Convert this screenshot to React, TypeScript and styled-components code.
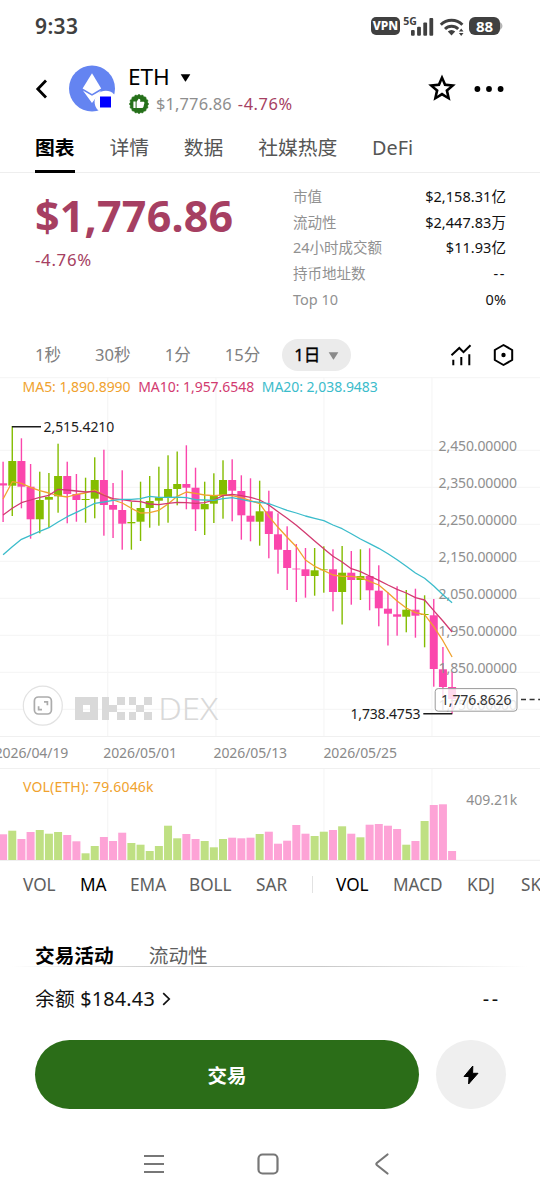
import React from "react";
import styled, { createGlobalStyle } from "styled-components";

const GlobalStyle = createGlobalStyle`
  *, *::before, *::after { box-sizing: border-box; }
  body {
    margin: 0;
    background: #fff;
    font-family: "Noto Sans", "Noto Sans CJK SC", sans-serif;
    color: #111;
    overflow: hidden;
  }
  svg { display: block; flex: none; }
  svg text { white-space: pre; }
`;

const ROSE = "#a63f62";
const UP = "#84bd00";
const DOWN = "#fb46ac";
const ORANGE = "#f0a22e";
const CRIMSON = "#d23a70";
const CYAN = "#3bbccb";
const GRID = "#f6f6f6";

const Screen = styled.main`
  width: 540px;
  height: 1200px;
  display: flex;
  flex-direction: column;
  background: #fff;
  overflow: hidden;
`;

/* ---------- status bar ---------- */

const StatusBar = styled.div`
  height: 52px;
  flex: none;
  display: flex;
  align-items: center;
  justify-content: space-between;
  padding: 0 37px 0 35px;
  color: #404040;
`;

const Clock = styled.span`
  font-size: 21px;
  font-weight: 600;
  line-height: 26px;
  letter-spacing: 0.4px;
`;

const StatusIcons = styled.div`
  display: flex;
  align-items: center;
`;

const VpnBadge = styled.span`
  width: 29px;
  height: 18px;
  border-radius: 5px;
  background: #404040;
  color: #fff;
  font-size: 12px;
  font-weight: 800;
  line-height: 18.5px;
  text-align: center;
  margin-right: 2px;
`;

const Battery = styled.span`
  width: 31px;
  height: 18px;
  border-radius: 6px;
  background: #404040;
  color: #fff;
  font-size: 15px;
  font-weight: 700;
  line-height: 18.6px;
  text-align: center;
`;

/* ---------- token header ---------- */

const Header = styled.header`
  height: 73px;
  flex: none;
  display: flex;
  align-items: center;
  padding: 0 36.5px 0 35px;
`;

const TokenInfo = styled.div`
  flex: 1;
  display: flex;
  flex-direction: column;
  padding: 3px 0 0 13px;
`;

const TokenName = styled.div`
  display: flex;
  align-items: center;
  gap: 10px;
  height: 28px;
  font-size: 22.6px;
  line-height: 28px;
  color: #000;

  svg { margin-top: 2px; }
`;

const TokenQuote = styled.div`
  display: flex;
  align-items: center;
  height: 26px;
  padding-left: 1px;
  font-size: 16.4px;
  line-height: 26px;
  color: #8e8e8e;
`;

const QuoteValue = styled.span`
  margin: 0 6px 0 7px;
  letter-spacing: 0.15px;
`;

const QuoteChange = styled.span`
  color: ${ROSE};
  letter-spacing: 0.6px;
`;

const HeaderActions = styled.div`
  display: flex;
  align-items: center;
  gap: 17px;
`;

/* ---------- tabs ---------- */

const Tabs = styled.nav`
  height: 48px;
  flex: none;
  display: flex;
  gap: 34.8px;
  padding: 0 35px;
  border-bottom: 1px solid #eee;
`;

const Tab = styled.span<{ $active?: boolean }>`
  height: 48px;
  font-size: 19.8px;
  line-height: 45.6px;
  font-weight: ${(p) => (p.$active ? 700 : 400)};
  color: ${(p) => (p.$active ? "#000" : "#555")};
  border-bottom: 3px solid ${(p) => (p.$active ? "#000" : "transparent")};
`;

/* ---------- price summary ---------- */

const Summary = styled.section`
  height: 158px;
  flex: none;
  display: flex;
  justify-content: space-between;
  padding: 0 34px 0 35px;
`;

const PriceColumn = styled.div`
  display: flex;
  flex-direction: column;
  padding-top: 16px;
  color: ${ROSE};
`;

const Price = styled.div`
  font-size: 43px;
  font-weight: 700;
  line-height: 54px;
  letter-spacing: 0.2px;
`;

const PriceChange = styled.div`
  font-size: 16.8px;
  line-height: 24px;
  margin-top: 5px;
  letter-spacing: 0.7px;
`;

const Stats = styled.dl`
  width: 213px;
  margin: 0;
  padding-top: 11px;
`;

const Stat = styled.div`
  display: flex;
  justify-content: space-between;
  font-size: 14.5px;
  line-height: 25.7px;
`;

const StatName = styled.dt`
  color: #919191;
`;

const StatValue = styled.dd<{ $blank: boolean }>`
  margin: 0;
  color: #111;
  letter-spacing: ${(p) => (p.$blank ? "1.6px" : "0.05px")};
`;

/* ---------- interval picker ---------- */

const Intervals = styled.div`
  height: 46px;
  flex: none;
  display: flex;
  align-items: center;
  padding: 1px 26px 0 35px;
  font-size: 16.6px;
  line-height: 24px;
  color: #808080;
`;

const Interval = styled.span`
  margin-right: 34px;
`;

const IntervalPill = styled.span`
  width: 69px;
  height: 32px;
  border-radius: 16px;
  margin-left: -12px;
  padding: 0 12px;
  display: flex;
  align-items: center;
  justify-content: space-between;
  background: #ebebeb;
  color: #000;
  -webkit-text-stroke: 0.35px #000;

  svg { margin-top: 3px; }
`;

const ChartTools = styled.div`
  margin-left: auto;
  display: flex;
  gap: 21.5px;
`;

/* ---------- indicators ---------- */

const Indicators = styled.div`
  height: 46px;
  flex: none;
  display: flex;
  align-items: center;
  gap: 23px;
  padding-left: 23px;
  font-size: 17.2px;
  white-space: nowrap;
  overflow: hidden;
`;

const Indicator = styled.span<{ $active?: boolean; $width: number }>`
  flex: none;
  width: ${(p) => p.$width}px;
  color: ${(p) => (p.$active ? "#000" : "#5e5e5e")};
`;

const Divider = styled.span`
  flex: none;
  width: 1px;
  height: 17px;
  background: #e2e2e2;
`;

/* ---------- activity + balance ---------- */

const ActivityTabs = styled.div`
  height: 61px;
  flex: none;
  display: flex;
  align-items: flex-end;
  gap: 35px;
  padding: 0 35px;
  font-size: 19.7px;
  line-height: 24px;
`;

const ActivityTab = styled.span<{ $active?: boolean }>`
  font-weight: ${(p) => (p.$active ? 700 : 400)};
  color: ${(p) => (p.$active ? "#000" : "#5e5e5e")};
`;

const FadeLine = styled.div`
  height: 1px;
  flex: none;
  margin: -2px 12px 0;
  background: linear-gradient(90deg, transparent, #c8c8c8 30%, #c8c8c8 60%, transparent);
`;

const Balance = styled.div`
  height: 63px;
  flex: none;
  display: flex;
  align-items: center;
  justify-content: space-between;
  padding: 0 39px 0 35px;
  font-size: 19.8px;
  line-height: 26px;
  color: #111;
`;

const BalanceLabel = styled.span`
  display: flex;
  align-items: center;
  gap: 7.5px;
  letter-spacing: 0.2px;
`;

const BalanceValue = styled.span`
  letter-spacing: 2.8px;
`;

const Actions = styled.div`
  margin-top: 10px;
  flex: none;
  display: flex;
  gap: 17px;
  padding: 0 34px 0 35px;
`;

const TradeButton = styled.button`
  flex: 1;
  height: 69px;
  border: 0;
  border-radius: 35px;
  background: #2b6d18;
  color: #fff;
  font: inherit;
  font-size: 19.5px;
  font-weight: 700;
`;

const FlashButton = styled.button`
  width: 70px;
  height: 69px;
  border: 0;
  border-radius: 35px;
  background: #efefef;
  display: flex;
  align-items: center;
  justify-content: center;
  padding: 0;
`;

const SystemNav = styled.div`
  flex: 1;
  display: flex;
  align-items: center;
  justify-content: center;
  gap: 90px;
  padding: 19px 4px 0 0;
`;

/* ---------- chart data ---------- */

// [high, low, body top, body bottom, volume height, rising]
type Candle = [number, number, number, number, number, 0 | 1];

const CANDLES: Candle[] = [
  [461.7, 522, 483.3, 485.5, 25.7, 0],
  [426, 516, 461, 485.7, 29.3, 1],
  [438.3, 508.3, 461, 486.7, 21, 0],
  [464, 538.7, 486.7, 519.3, 28, 0],
  [471.7, 533.3, 500, 519.3, 30, 1],
  [473, 527.3, 497, 499.7, 26.3, 1],
  [443.7, 512.7, 476, 496.3, 28, 1],
  [461.7, 523.3, 476, 494, 25, 0],
  [474, 521.7, 494, 500, 18.7, 0],
  [477.7, 522.7, 499, 500, 6.7, 1],
  [457.3, 518.3, 480, 498.7, 14, 1],
  [449.7, 535.7, 480, 505, 23, 0],
  [483, 538, 505, 509.7, 19, 0],
  [470.3, 549.7, 510, 523.7, 27.3, 0],
  [502, 549.7, 522, 523.3, 17, 1],
  [481.7, 541, 508, 521.7, 15.3, 1],
  [476, 527.7, 501, 508, 9, 1],
  [466.7, 525.7, 497.3, 500.7, 14, 1],
  [455.3, 522.7, 489, 497.3, 34.3, 1],
  [451.5, 505.3, 484, 489, 21.7, 1],
  [445.3, 509.3, 484, 487.7, 26, 0],
  [467.7, 531, 487.7, 509.3, 21, 0],
  [481.7, 535, 504, 509.3, 19, 1],
  [473.3, 523, 495.7, 503.7, 12.7, 1],
  [460.3, 518.7, 480, 495.7, 21, 1],
  [459.3, 521.3, 480, 490.7, 22.3, 0],
  [475.3, 539.7, 491, 515.3, 21.7, 0],
  [478.3, 541.3, 515.7, 521.7, 22.3, 0],
  [480.7, 545.7, 511.3, 521.7, 26, 1],
  [490.7, 558.3, 511.3, 534, 28.3, 0],
  [513.3, 573.7, 534.3, 549.7, 16.3, 0],
  [526.3, 590, 550, 568, 19.3, 0],
  [544, 602, 568.6, 569.3, 35, 0],
  [548, 597.7, 569.3, 576, 26.3, 0],
  [548, 595.7, 570.3, 576, 24, 1],
  [546.3, 592.7, 569.4, 570.2, 28.3, 1],
  [549.3, 611.3, 569.3, 592, 30, 0],
  [546, 624.5, 572.7, 592, 33.7, 1],
  [551, 604.7, 572.7, 580, 26.3, 0],
  [549.3, 600, 576, 580, 22.7, 1],
  [548.3, 610.3, 576, 590.3, 35.3, 0],
  [565.3, 626.3, 590.7, 608.3, 36, 0],
  [592.3, 645.5, 608.7, 613.7, 34.3, 0],
  [586.3, 635.7, 614.3, 616.7, 31, 0],
  [590, 632.3, 609.7, 616.7, 15.3, 1],
  [588.7, 637.7, 609.7, 615.7, 19, 0],
  [595.3, 647.3, 614, 615, 39, 1],
  [599, 686.7, 615.3, 669, 55, 0],
  [647, 698, 669.3, 687, 55.7, 0],
  [672, 713.7, 687, 699, 9, 0],
];

const MA5 = [
  499, 481.7, 483.3, 487.3, 490.7, 493, 495.7, 497, 494.3, 493, 490, 495, 500, 503, 508.3, 513, 512.7,
  510.3, 504, 496.3, 492, 493.3, 495, 495.7, 495, 495.7, 497.7, 500.7, 503.7, 516.3, 527.3, 537.3, 546.7,
  560, 566.3, 570.7, 575, 576.3, 576.3, 577.7, 581.3, 585, 592.7, 601, 608, 612.7, 614.7, 626.7, 640.7, 657,
];
const MA10 = [
  515, 508.3, 502.7, 500, 497.3, 495.3, 489.3, 490, 491, 492, 491.3, 495.3, 498.7, 499.7, 501, 501.7, 504,
  504.7, 503.3, 502.3, 502.7, 503.3, 502.7, 500, 495.7, 494.3, 495.7, 497.3, 500, 505, 511.7, 518.3, 525.3,
  533, 541, 548.7, 556.3, 562, 568.7, 571.7, 576, 580.3, 585, 589.3, 593, 597.7, 600, 610.7, 621, 632,
];
const MA20 = [
  554.7, 546.7, 539.3, 535.3, 531.3, 527.7, 522, 516.7, 512.3, 508, 503.3, 502, 500.3, 499.3, 499.3, 498.7,
  496.3, 497.3, 497.3, 497.2, 497.7, 499.7, 500, 500.3, 498.7, 497.7, 499.3, 501.3, 502.3, 503.7, 507, 510.3,
  513, 516, 518.3, 520.7, 525, 528.7, 533.7, 539, 543.7, 548.3, 553.7, 559.7, 566.3, 573, 578.3, 586, 594.7, 602.7,
];

const STEP = 9.163;
const cx = (i: number) => 3.1 + i * STEP;
const linePoints = (ys: number[]) => ys.map((y, i) => `${cx(i).toFixed(2)},${y}`).join(" ");

const GRID_X = [107.7, 216, 324, 432];
const PRICE_LABELS = [
  ["2,450.00000", 450.3],
  ["2,350.00000", 487.3],
  ["2,250.00000", 524.3],
  ["2,150.00000", 561.3],
  ["2,050.00000", 598.3],
  ["1,950.00000", 635.3],
  ["1,850.00000", 672.3],
  ["1,750.00000", 709.3],
] as const;
const DATES = [
  ["2026/04/19", -5.3],
  ["2026/05/01", 103.3],
  ["2026/05/13", 213.5],
  ["2026/05/25", 323.4],
] as const;

// blocks of the exchange wordmark: column, row, width in cells
const CELL = 7.7;
const MARK: [number, number, number][] = [
  [0, 0, 3], [0, 1, 1], [2, 1, 1], [0, 2, 3],
  [3.5, 0, 1], [3.5, 1, 2], [3.5, 2, 1], [5.5, 0, 1], [5.5, 2, 1],
  [7, 0, 1], [9, 0, 1], [8, 1, 1], [7, 2, 1], [9, 2, 1],
];

function PriceChart() {
  return (
    <svg width="540" height="391" viewBox="0 377 540 391" fontSize="14">
      <g stroke={GRID} strokeWidth="1.2">
        <line x1="0" x2="540" y1="377.7" y2="377.7" />
        {PRICE_LABELS.map(([t, y]) => (
          <line key={t} x1="0" x2="540" y1={y} y2={y} />
        ))}
        {GRID_X.map((x) => (
          <line key={x} x1={x} x2={x} y1="377" y2="736" />
        ))}
        <line x1="0" x2="540" y1="736.5" y2="736.5" stroke="#f0f0f0" />
      </g>

      <g fill="#d9d9d9">
        <g shapeRendering="crispEdges">
          {MARK.map(([c, r, w]) => (
            <rect key={`${c}-${r}`} x={74.8 + c * CELL} y={697 + r * CELL} width={w * CELL} height={CELL} />
          ))}
        </g>
        <text x="158.2" y="720" fontSize="32" fontWeight="300" textLength="60" lengthAdjust="spacingAndGlyphs">DEX</text>
      </g>
      <circle cx="42.8" cy="705.7" r="19.5" fill="#fff" stroke="#e2e2e2" strokeWidth="1.2" />
      <g fill="none" stroke="#acacac" strokeWidth="1.7">
        <rect x="34.4" y="697" width="17" height="17" rx="4" />
        <path d="M44 701.9h3.4v3.4M38.6 706.3v3.4h3.4" />
      </g>

      {CANDLES.map(([h, l, t, b, , up], i) => (
        <g key={i} fill={up ? UP : DOWN}>
          <rect x={cx(i) - 0.7} y={h} width="1.4" height={l - h} />
          <rect x={cx(i) - 4} y={t} width="8" height={Math.max(b - t, 0.8)} />
        </g>
      ))}

      <g fill="#8f8f8f">
        {PRICE_LABELS.map(([t, y]) => (
          <text key={t} x="438.6" y={y + 0.7} textLength="78.4">{t}</text>
        ))}
      </g>

      <g fill="none" strokeWidth="1.3" strokeLinejoin="round">
        <polyline points={linePoints(MA5)} stroke={ORANGE} />
        <polyline points={linePoints(MA10)} stroke={CRIMSON} />
        <polyline points={linePoints(MA20)} stroke={CYAN} />
      </g>

      <text x="22.6" y="392.3" fill={ORANGE} textLength="108">MA5: 1,890.8990</text>
      <text x="138.2" y="392.3" fill={CRIMSON} textLength="116">MA10: 1,957.6548</text>
      <text x="261.8" y="392.3" fill={CYAN} textLength="116">MA20: 2,038.9483</text>

      <g fill="#1c1c1c">
        <rect x="12" y="426" width="29" height="1.5" />
        <text x="43.6" y="432.2" textLength="70.6">2,515.4210</text>
        <rect x="423.3" y="713" width="29" height="1.5" />
        <text x="350.5" y="719.2" textLength="70">1,738.4753</text>
      </g>

      <rect x="435.2" y="688.6" width="81.8" height="22.6" rx="3" fill="#fff" fillOpacity="0.8" stroke="#9a9a9a" />
      <text x="440.9" y="705.2" fill="#333" textLength="70.6">1,776.8626</text>
      <path d="M521 699.5h19" stroke="#333" strokeWidth="1.4" strokeDasharray="5 3.6" />

      <g fill="#8a8a8a">
        {DATES.map(([t, x]) => (
          <text key={t} x={x} y="758" textLength="73.6">{t}</text>
        ))}
      </g>
    </svg>
  );
}

function VolumeChart() {
  return (
    <svg width="540" height="93" viewBox="0 768 540 93" fontSize="14">
      <g stroke={GRID} strokeWidth="1.2">
        {GRID_X.map((x) => (
          <line key={x} x1={x} x2={x} y1="768" y2="860" />
        ))}
        <line x1="0" x2="540" y1="768.4" y2="768.4" stroke="#f0f0f0" />
        <line x1="0" x2="540" y1="860.4" y2="860.4" stroke="#f0f0f0" />
      </g>
      {CANDLES.map(([, , , , v, up], i) => (
        <rect key={i} x={cx(i) - 4} y={860 - v} width="8" height={v} fill={up ? "#bfe083" : "#fda3d6"} />
      ))}
      <text x="23" y="792.2" fill={ORANGE} textLength="130.5">VOL(ETH): 79.6046k</text>
      <text x="466.3" y="805" fill="#8f8f8f" textLength="51">409.21k</text>
    </svg>
  );
}

/* ---------- icons ---------- */

const starPoints = (c: number, outer: number, inner: number) =>
  Array.from({ length: 10 }, (_, i) => {
    const r = i % 2 ? inner : outer;
    const a = (Math.PI / 5) * i - Math.PI / 2;
    return `${(c + r * Math.cos(a)).toFixed(2)} ${(c + r * Math.sin(a)).toFixed(2)}`;
  }).join("L");

const StarIcon = () => (
  <svg width="30" height="30" viewBox="0 0 30 30">
    <path fillRule="evenodd" d={`M${starPoints(15, 14.5, 6.7)}ZM${starPoints(15, 8.2, 3.6)}Z`} />
  </svg>
);

const DotsIcon = () => (
  <svg width="30" height="8" viewBox="0 0 30 8">
    <circle cx="3.4" cy="4" r="2.9" />
    <circle cx="15" cy="4" r="2.9" />
    <circle cx="26.600" cy="4" r="2.9" />
  </svg>
);

const BackIcon = () => (
  <svg width="34" height="24" viewBox="0 0 34 24" fill="none" stroke="#000" strokeWidth="2.8">
    <path d="M11 3.5 2.8 12l8.2 8.5" />
  </svg>
);

const TokenIcon = () => (
  <svg width="46" height="47" viewBox="69 65 46 47">
    <circle cx="92" cy="88.5" r="23" fill="#6484f1" />
    <path d="M92 73.3 82.6 88.5 92 94 101.2 88.5Z" fill="#fff" />
    <path d="M82.9 90.5 92 95.8l9.2-5.3L92 103Z" fill="#fff" />
    <circle cx="105.8" cy="102" r="11.2" fill="#fff" />
    <rect x="100" y="96.5" width="11" height="11" fill="#00f" />
  </svg>
);

const badge = Array.from({ length: 32 }, (_, i) => {
  const r = i % 2 ? 8.7 : 9.7;
  const a = (Math.PI / 16) * i;
  return `${(10 + r * Math.cos(a)).toFixed(2)},${(10 + r * Math.sin(a)).toFixed(2)}`;
}).join(" ");

const ThumbBadge = () => (
  <svg width="20" height="20" viewBox="0 0 20 20">
    <polygon points={badge} fill="#25701a" stroke="#25701a" strokeWidth="0.6" strokeLinejoin="round" />
    <path
      d="M4.400 7.600h2.200v6.400H4.400zM7.600 7.800 9.600 4.700c1.400 0 1.900.9 1.700 2L11 7.700h3.300c.8 0 1.300.6 1.100 1.400l-1 3.900c-.2.700-.6 1-1.300 1H7.600Z"
      fill="#fff"
    />
  </svg>
);

const SignalIcon = () => (
  <svg width="32" height="20" viewBox="402 15 32 20" fill="#404040">
    <text x="403.200" y="23.600" fontSize="10.500" fontWeight="700">5G</text>
    <rect x="411" y="29" width="3.700" height="5.700" rx="1" />
    <rect x="417.100" y="25.700" width="3.800" height="9" rx="1" />
    <rect x="423.300" y="21.500" width="3.800" height="13.200" rx="1" />
    <rect x="429.400" y="17" width="3.800" height="17.700" rx="1" />
  </svg>
);

const WifiIcon = () => (
  <svg width="35" height="20" viewBox="434 15 35 20" fill="none" stroke="#404040" strokeWidth="2.900">
    <path d="M440.800 23.700a15.200 15.200 0 0 1 21.600 0" />
    <path d="M445 28a9.400 9.400 0 0 1 13.200 0" />
    <path d="M447.800 30.600a5.300 5.300 0 0 1 7.400 0L451.500 34.600Z" fill="#404040" stroke="none" />
    <path d="M461.200 27.600l2.300 3h-4.600zM461.200 35l2.300-3h-4.600z" fill="#404040" stroke="none" />
  </svg>
);

const BatteryTip = () => (
  <svg width="3" height="8" viewBox="0 0 3 8">
    <path d="M0 0q2.500 1.500 2.500 4T0 8Z" fill="#b5b5b5" />
  </svg>
);

const TrendIcon = () => (
  <svg width="22" height="24" viewBox="449.500 342 22 24" fill="none" stroke="#000" strokeWidth="2">
    <path d="M451 354.300l7.800-7.300 4.200 4.200 7-7" />
    <path d="M452.800 358.700v5.500M460.800 356v8.200M468.800 353.300v10.900" />
  </svg>
);

const HexIcon = () => (
  <svg width="21" height="24" viewBox="0 0 21 24" fill="none" stroke="#000" strokeWidth="2">
    <path d="M10.500 2 19.200 7v10l-8.700 5-8.700-5V7Z" strokeLinejoin="round" />
    <circle cx="10.500" cy="12" r="2.200" fill="#000" stroke="none" />
  </svg>
);

const Caret = ({ size, color }: { size: number; color: string }) => (
  <svg width={size} height={size * 0.7} viewBox="0 0 10 7">
    <path d="M0.600 0.300h8.800L5.400 6.500q-.4.500-.8 0Z" fill={color} />
  </svg>
);

const STATS = [
  ["市值", "$2,158.31亿"],
  ["流动性", "$2,447.83万"],
  ["24小时成交额", "$11.93亿"],
  ["持币地址数", "--"],
  ["Top 10", "0%"],
];

export default function App() {
  return (
    <Screen>
      <GlobalStyle />
      <StatusBar>
        <Clock>9:33</Clock>
        <StatusIcons>
          <VpnBadge>VPN</VpnBadge>
          <SignalIcon />
          <WifiIcon />
          <Battery>88</Battery>
          <BatteryTip />
        </StatusIcons>
      </StatusBar>

      <Header>
        <BackIcon />
        <TokenIcon />
        <TokenInfo>
          <TokenName>
            ETH
            <Caret size={11} color="#000" />
          </TokenName>
          <TokenQuote>
            <ThumbBadge />
            <QuoteValue>$1,776.86</QuoteValue>
            <QuoteChange>-4.76%</QuoteChange>
          </TokenQuote>
        </TokenInfo>
        <HeaderActions>
          <StarIcon />
          <DotsIcon />
        </HeaderActions>
      </Header>

      <Tabs>
        <Tab $active>图表</Tab>
        <Tab>详情</Tab>
        <Tab>数据</Tab>
        <Tab>社媒热度</Tab>
        <Tab>DeFi</Tab>
      </Tabs>

      <Summary>
        <PriceColumn>
          <Price>$1,776.86</Price>
          <PriceChange>-4.76%</PriceChange>
        </PriceColumn>
        <Stats>
          {STATS.map(([name, value]) => (
            <Stat key={name}>
              <StatName>{name}</StatName>
              <StatValue $blank={value === "--"}>{value}</StatValue>
            </Stat>
          ))}
        </Stats>
      </Summary>

      <Intervals>
        <Interval>1秒</Interval>
        <Interval>30秒</Interval>
        <Interval>1分</Interval>
        <Interval>15分</Interval>
        <IntervalPill>
          1日
          <Caret size={11} color="#8a8a8a" />
        </IntervalPill>
        <ChartTools>
          <TrendIcon />
          <HexIcon />
        </ChartTools>
      </Intervals>

      <PriceChart />
      <VolumeChart />

      <Indicators>
        <Indicator $width={34}>VOL</Indicator>
        <Indicator $width={27} $active>MA</Indicator>
        <Indicator $width={36}>EMA</Indicator>
        <Indicator $width={44}>BOLL</Indicator>
        <Indicator $width={33}>SAR</Indicator>
        <Divider />
        <Indicator $width={34} $active>VOL</Indicator>
        <Indicator $width={51}>MACD</Indicator>
        <Indicator $width={31}>KDJ</Indicator>
        <Indicator $width={40}>SKDJ</Indicator>
      </Indicators>

      <ActivityTabs>
        <ActivityTab $active>交易活动</ActivityTab>
        <ActivityTab>流动性</ActivityTab>
      </ActivityTabs>
      <FadeLine />
      <Balance>
        <BalanceLabel>
          余额 $184.43
          <svg width="9" height="14" viewBox="0 0 9 14" fill="none" stroke="#111" strokeWidth="1.700">
            <path d="M1.200 1.200 7.200 7l-6 5.800" />
          </svg>
        </BalanceLabel>
        <BalanceValue>--</BalanceValue>
      </Balance>

      <Actions>
        <TradeButton>交易</TradeButton>
        <FlashButton>
          <svg width="16" height="20" viewBox="0 0 16 20">
            <path d="M9.800 1 1 11.500h5L5.600 19 15 8.300H9.600Z" stroke="#000" strokeLinejoin="round" />
          </svg>
        </FlashButton>
      </Actions>

      <SystemNav>
        <svg width="24" height="24" viewBox="0 0 24 24" stroke="#777" strokeWidth="2.200">
          <path d="M2 4h20M2 12h20M2 20h20" />
        </svg>
        <svg width="24" height="24" viewBox="0 0 24 24" fill="none" stroke="#777" strokeWidth="2.200">
          <rect x="2.500" y="2.500" width="19" height="19" rx="4" />
        </svg>
        <svg width="24" height="24" viewBox="0 0 24 24" fill="none" stroke="#777" strokeWidth="2.200" strokeLinecap="round" strokeLinejoin="round">
          <path d="M17.500 2.500 6.800 11q-1 1 0 2l10.700 8.500" />
        </svg>
      </SystemNav>
    </Screen>
  );
}
